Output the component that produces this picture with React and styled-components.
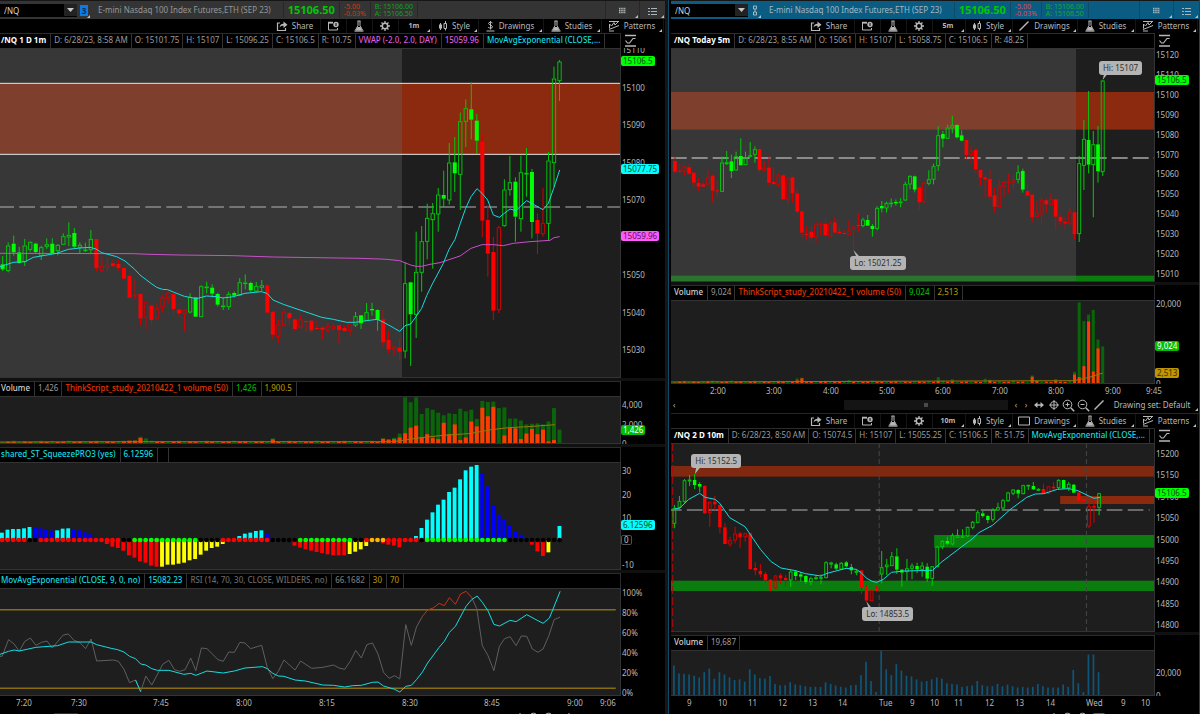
import React from "react";
import styled, { createGlobalStyle } from "styled-components";

const GlobalStyle = createGlobalStyle`
  * {
    box-sizing: border-box;
  }
  body {
    margin: 0;
    background: #000000;
    color: #b8b8b8;
    font-family: "Noto Sans", "Open Sans", sans-serif;
    font-size: 8px;
    line-height: 10px;
  }
  button, input {
    font: inherit;
    color: inherit;
    background: none;
    border: 0;
    padding: 0;
    margin: 0;
    border-radius: 0;
  }
`;

const GREEN = "#00ff00";
const RED = "#ff0000";
const CYAN = "#14dce0";

/* ---------- layout ---------- */

const Desk = styled.main`
  display: grid;
  grid-template-columns: 668fr 532fr;
  height: 100vh;
  overflow: hidden;
`;

const LeftPanel = styled.section`
  min-width: 0;
  border-right: 3px solid #161616;
`;

const RightPanel = styled.section`
  min-width: 0;
  padding-left: 2px;
  border-left: 1px solid #0b4b68;
  border-right: 1px solid #0b4b68;
`;

const Header = styled.header`
  display: flex;
  align-items: center;
  height: 19px;
  border-top: 1px solid #161616;
  background: ${(props) => (props.$active ? "#0a5c82" : "#343434")};
  color: ${(props) => (props.$active ? "#a4b8c0" : "#969696")};
  white-space: nowrap;
`;

const Combo = styled.div`
  display: flex;
  align-items: center;
  width: 77px;
  height: 13px;
  background: #000000;
  flex: none;
`;

const SymbolInput = styled.input`
  flex: 1;
  min-width: 0;
  padding-left: 4px;
  height: 13px;
  color: #d8d8d8;
  outline: none;
`;

const DropButton = styled.button`
  width: 13px;
  height: 12px;
  background: #222222;
  display: flex;
  align-items: center;
  justify-content: center;
`;

const LinkButton = styled.button`
  position: relative;
  width: 14px;
  height: 18px;
  display: flex;
  align-items: center;
  justify-content: center;
  flex: none;
`;

const LinkBadge = styled.span`
  width: 8px;
  height: 11px;
  line-height: 11px;
  background: #0a7be8;
  color: #0b2c50;
  font-weight: 700;
`;

const HeadCell = styled.div`
  display: flex;
  align-items: center;
  height: 16px;
  padding: 0 4px;
  border-right: 1px solid ${(props) => (props.$active ? "#0d4c69" : "#272727")};
`;

const Instrument = styled(HeadCell)`
  padding: 0 12px 0 7px;
`;

const LastPrice = styled(HeadCell)`
  color: #00c800;
  font-size: 11px;
  font-weight: 700;
`;

const Stack = styled(HeadCell)`
  flex-direction: column;
  align-items: flex-start;
  justify-content: center;
  font-size: 7px;
  line-height: 7px;
  color: ${(props) => props.$color};
`;

const Spacer = styled.div`
  flex: 1;
`;

const HeadButton = styled.button`
  position: relative;
  width: ${(props) => props.$w}px;
  height: 18px;
  padding-top: 4px;
  border-left: 1px solid ${(props) => (props.$active ? "#0d4c69" : "#272727")};
  color: #a9b4b8;
`;

const Toolbar = styled.div`
  display: flex;
  justify-content: flex-end;
  height: ${(props) => props.$h || 14}px;
  padding-right: 1px;
  border-top: ${(props) => (props.$ruled ? "1px solid #262626" : "0")};
`;

const ToolButton = styled.button`
  position: relative;
  display: flex;
  align-items: center;
  justify-content: center;
  gap: 4px;
  width: ${(props) => props.$w}px;
  padding-right: 2px;
  border-right: 1px solid #151515;
  font-size: ${(props) => (props.$strong ? 7 : 8)}px;
  font-weight: ${(props) => (props.$strong ? 700 : 400)};
  white-space: nowrap;
`;

const Corner = styled.i`
  position: absolute;
  right: 1px;
  bottom: 1px;
  border-left: 3px solid transparent;
  border-bottom: 3px solid #c0c0c0;
`;

const Row = styled.div`
  display: grid;
  grid-template-columns: minmax(0, 1fr) 44px;
`;

const Legend = styled.div`
  display: flex;
  height: 15px;
  border-top: 1px solid #2c2c2c;
  border-right: 1px solid #2c2c2c;
  overflow: hidden;
  white-space: nowrap;
`;

const LegendCell = styled.span`
  padding: 0 ${(props) => (props.$color ? 4 : 3)}px 0 ${(props) => (props.$flush ? 1 : 3)}px;
  min-width: 11px;
  line-height: 12px;
  border-right: 1px solid #333333;
  color: ${(props) => props.$color || "#9c9c9c"};
  font-weight: ${(props) => (props.$bold ? 700 : props.$color ? 500 : 400)};
`;

const ScaleButton = styled.button`
  display: flex;
  align-items: center;
  padding-left: 3px;
`;

const Plot = styled.div`
  position: relative;
  height: ${(props) => props.$h}px;
  background: #1e1e1e;
  border-top: 1px solid #333333;
  border-right: 1px solid #333333;
  border-bottom: 1px solid #333333;
`;

const PlotSvg = styled.svg`
  display: block;
  width: 100%;
  height: 100%;
`;

const PaneGap = styled.div`
  height: 3px;
  background: #111111;
`;

const AxisBox = styled.div`
  position: relative;
  display: flex;
  flex-direction: column;
  overflow: hidden;
  height: ${(props) => props.$h}px;
`;

const Scale = styled.div`
  flex: 1;
  display: flex;
  flex-direction: column;
  justify-content: space-between;
  margin: ${(props) => props.$from - 5}px 0 ${(props) => props.$to - 5}px;
  padding-left: 1px;
`;

const ScaleLabel = styled.span`
  height: 10px;
`;

const Tag = styled.span`
  position: absolute;
  left: 0;
  top: ${(props) => props.$y}px;
  height: 10px;
  padding: 0 2px;
  border-radius: 2px;
  background: ${(props) => props.$bg};
  color: ${(props) => props.$ink || "#0a4a14"};
  border: ${(props) => (props.$line ? "1px solid " + props.$line : "0")};
  line-height: ${(props) => (props.$line ? 8 : 10)}px;
`;

const Bubble = styled.span`
  position: absolute;
  left: ${(props) => props.$x}%;
  top: ${(props) => props.$y}px;
  height: 14px;
  padding: 0 4px;
  border-radius: 3px;
  background: #b4b4b4;
  color: #303030;
  line-height: 13px;
  white-space: nowrap;
`;

const TimeAxis = styled.div`
  display: flex;
  height: ${(props) => props.$h}px;
  line-height: 14px;
  overflow: hidden;
  white-space: nowrap;
`;

const Tick = styled.span`
  flex: ${(props) => props.$span} 0 0;
  min-width: 0;
`;

const ScrollRow = styled.div`
  display: flex;
  align-items: center;
  height: 16px;
`;

const Thumb = styled.div`
  height: 10px;
  flex: ${(props) => props.$grow};
  background: ${(props) => props.$bg || "#141414"};
  display: flex;
  align-items: center;
  justify-content: center;
`;

const Grip = styled.i`
  width: 4px;
  height: 4px;
  background: #4a4a4a;
`;

const Track = styled.div`
  flex: ${(props) => props.$grow};
  padding-left: 2px;
`;

const ScrollTool = styled.button`
  width: ${(props) => props.$w || 15}px;
  height: 14px;
  display: flex;
  align-items: center;
  justify-content: center;
`;

const SetButton = styled.button`
  position: relative;
  width: 92px;
  height: 14px;
  padding-right: 2px;
  white-space: nowrap;
`;

/* ---------- icons ---------- */

const Svg = ({ w = 12, h = 12, children }) => (
  <svg width={w} height={h} viewBox={`0 0 ${w} ${h}`} fill="none" stroke="currentColor" aria-hidden="true">
    {children}
  </svg>
);

const ShareIcon = () => (
  <Svg>
    <path d="M4 3H1.500v7.500h8V8" strokeWidth="1.200" />
    <path d="M3.500 7.500C4 4.500 5.500 3.700 7.500 3.700V1.500L11.500 4.700 7.500 8V5.800C5.800 5.800 4.500 6.200 3.500 7.500z" fill="currentColor" stroke="none" />
  </Svg>
);

const CalendarIcon = () => (
  <Svg>
    <path d="M6 3H1.500v7h9V8" />
    <path d="M1 2.500h5" strokeWidth="1.500" />
    <circle cx="9" cy="4.500" r="2.700" fill="currentColor" stroke="none" />
    <path d="M9 3v3" stroke="#000000" />
  </Svg>
);

const FlaskIcon = () => (
  <Svg w={10}>
    <path d="M3.500 1h3M4 1v4.500L1.500 10M6 1v4.500L8.500 10" />
    <path d="M3.500 7h3l2 3.500h-7z" fill="currentColor" stroke="none" />
    <path d="M.5 11h9" strokeWidth="1.300" />
  </Svg>
);

const GearIcon = () => (
  <Svg>
    <circle cx="6" cy="6" r="2.700" strokeWidth="1.500" />
    <path d="M6 1v2M6 9v2M1 6h2M9 6h2M2.500 2.500l1.300 1.300M8.200 8.200l1.300 1.300M9.500 2.500L8.200 3.800M3.800 8.200L2.500 9.500" strokeWidth="1.300" />
  </Svg>
);

const StyleIcon = () => (
  <Svg w={10}>
    <path d="M2.500 3v7M7.500 1v2M7.500 8.500v2" />
    <path d="M1 4.500h3v4H1z" fill="currentColor" stroke="none" />
    <path d="M6 3.500h2.500v5H6z" />
  </Svg>
);

const DollarIcon = () => (
  <Svg w={9}>
    <path d="M6.500 3C5.500 2 2.500 2 2.500 3.500S6.500 5 6.500 6.800 3.500 8.500 2.200 7.300M4.500 1v8.500" />
    <path d="M.5 11h8" />
  </Svg>
);

const LineIcon = () => (
  <Svg>
    <path d="M1.500 10.500l9-9" strokeWidth="1.400" />
  </Svg>
);

const BoxIcon = () => (
  <Svg>
    <path d="M.5 2h11v8H.5z" />
  </Svg>
);

const PatternsIcon = () => (
  <Svg>
    <path d="M1 1.500h10M1 9.500l10-4M1.500 8.500V4l2 2 2.500-3.500 1 2.500 3-3M1 11h5" />
  </Svg>
);

const CurveIcon = () => (
  <Svg w={13} h={13}>
    <path d="M1 1.500h11M1 12h11" strokeWidth="1.300" />
    <path d="M1.500 6.500l2 2.500h2l3.500-4.500h2.500" strokeWidth="1.200" />
  </Svg>
);

const GridIcon = () => (
  <Svg w={8} h={8}>
    <path d="M0 1.500h7M0 3.500h7M0 5.500h7" strokeDasharray="1.500 .7" strokeWidth="1.400" />
  </Svg>
);

const ListIcon = () => (
  <Svg w={10} h={9}>
    <path d="M3 1.500h6M3 4.500h6M3 7.500h6" />
    <path d="M0 1.500h2M0 4.500h2M0 7.500h2" />
  </Svg>
);

const ChainIcon = () => (
  <Svg w={6} h={11}>
    <path d="M1.500 1h3v3h-3zM1.500 7h3v3h-3zM3 4v3" />
  </Svg>
);

const ZoomIcon = ({ plus }) => (
  <Svg w={13} h={13}>
    <circle cx="5.500" cy="5.500" r="4.300" />
    <path d="M8.700 8.700l3.500 3.500" strokeWidth="1.500" />
    <path d={plus ? "M3.500 5.500h4M5.500 3.500v4" : "M3.500 5.500h4"} />
  </Svg>
);

const TargetIcon = () => (
  <Svg>
    <circle cx="6" cy="6" r="3.500" />
    <path d="M6 1v10M1 6h10" />
  </Svg>
);

const PanIcon = () => (
  <Svg>
    <path d="M1 6l3.500-3v6zM11 6L7.500 3v6z" fill="currentColor" stroke="none" />
    <path d="M4 6h4" strokeWidth="1.500" />
  </Svg>
);

/* ---------- series ---------- */

// one candle is "high top bottom low kind", capitals are filled bodies
const parse = (text, dy = 0) =>
  text
    .trim()
    .split(/\s*,\s*/)
    .map((c) => {
      const [hi, top, bot, lo, kind] = c.split(" ");
      return { hi: +hi + dy, top: +top + dy, bot: +bot + dy, lo: +lo + dy, kind };
    });

const minuteCandles = [
  ...parse(
    `138 163 178 183 G,97 107 182 187 g,77 101 127 137 G,110 127 159 161 G,87 107 155 168 g,94 96 118 125 g,98 101 126 130 G,
    107 112 136 150 g,85 103 109 117 g,85 101 130 131 G,102 105 122 136 g,70 79 103 104 g,37 75 81 108 g,54 69 110 114 G,
    97 105 112 132 g,98 119 121 126 g,60 87 119 130 g,87 87 174 185 R,140 168 182 187 r,143 165 172 184 r,148 160 168 173 R,
    150 162 174 182 R,172 174 206 209 R,194 198 263 264 R,208 255 257 268 r,250 252 325 346 R,276 277 323 357 r,284 287 330 343 R,
    278 295 324 330 r,254 262 290 307 r,241 248 265 280 r,250 252 297 313 R,296 299 310 320 R,298 299 310 364 r,250 261 306 310 g,
    261 262 320 321 G,226 229 320 320 g,215 230 233 250 g,223 233 251 262 G,249 252 284 290 G,262 287 290 300 g,245 252 290 300 g,
    245 249 257 263 G,204 217 255 258 g,193 218 221 238 g,215 219 241 248 G,216 228 243 247 g,210 226 232 243 g,222 226 308 309 R,
    304 305 374 386 R,329 344 380 400 r,297 307 344 350 r,308 309 325 348 R,326 328 357 362 R,316 328 352 355 r,332 333 336 366 R,
    330 332 361 370 R,332 354 357 359 R,350 353 359 387 R,338 349 360 369 r,340 349 355 367 r,345 346 360 402 R,348 354 363 366 R,
    328 343 362 378 r,306 319 345 351 g,315 316 340 357 G,279 307 331 331 g,278 297 301 317 G,298 300 330 362 G,300 328 397 410 R,
    362 390 418 431 R,404 411 418 435 r,385 413 425 453 R`,
    486
  ),
  ...parse(
    `637 700 903 925 g,695 697 793 948 G,545 666 793 864 g,528 574 667 725 g,461 504 574 628 g,459 490 509 656 g,414 434 492 545 g,
    362 435 446 472 G,279 338 450 464 g,261 337 370 426 G,188 214 373 480 g,148 175 214 291 g,97 178 209 268 G,192 212 272 312 G,
    254 275 512 562 R,465 510 611 680 R,560 606 782 810 R,527 532 779 790 r,388 419 527 530 g,318 397 419 437 g,382 395 500 575 G,
    317 367 506 545 g,294 369 372 440 g,357 366 516 565 G,491 510 551 612 R,414 520 551 560 r,306 332 520 572 g,50 86 338 410 g,
    30 35 92 153 g`,
    6
  ),
];

const fiveMinCandles = parse(
  `320 333 365 370 R,342 362 365 370 R,347 350 363 375 r,342 352 371 375 R,366 368 398 412 R,385 399 410 422 R,394 403 410 412 R,
  360 382 402 405 r,374 377 422 457 R,388 421 424 441 R,320 338 424 425 g,303 337 341 345 g,314 334 363 384 G,305 319 360 362 g,
  265 318 346 346 G,305 322 344 345 g,276 316 319 322 g,289 298 313 338 g,295 297 360 369 R,333 354 361 365 r,317 353 398 409 R,
  352 396 402 405 R,372 377 404 412 r,373 376 448 449 R,383 386 448 462 r,380 382 430 458 R,418 430 485 492 R,482 484 548 561 R,
  529 552 555 570 R,530 545 563 574 R,516 524 561 578 r,517 521 524 557 r,505 522 556 557 R,512 519 558 560 r,500 517 548 550 R,
  531 545 550 552 R,541 549 552 553 R,511 542 553 556 r,529 530 538 600 r,488 525 528 547 R,503 509 527 532 g,495 510 527 528 G,
  522 528 537 560 G,469 474 535 541 g,453 468 475 487 G,455 459 474 488 g,445 458 461 472 g,448 456 460 467 G,444 455 458 472 g,
  395 402 450 453 g,376 378 402 418 g,377 379 419 427 G,410 412 457 479 R,396 398 455 462 r,361 388 400 406 g,341 349 388 403 g,
  229 256 347 363 g,243 252 266 292 G,224 233 265 266 g,197 226 234 250 g,223 225 262 266 G,241 256 272 274 G,268 270 315 326 R,
  288 304 314 340 r,294 300 358 372 R,358 360 383 407 R,374 382 388 441 R,360 387 440 450 R,414 436 470 488 R,390 406 470 472 r,
  392 396 408 443 r,369 394 398 430 r,375 388 396 418 r,346 367 388 400 g,356 363 419 428 G,400 423 437 438 R,432 434 502 517 R,
  452 489 500 501 r,442 450 492 519 r,446 451 463 488 R,430 447 463 464 r,446 448 500 540 R,494 501 514 524 R,504 516 520 540 R,
  474 485 520 528 r,486 487 552 567 R,318 340 551 576 g,210 267 346 420 g,123 270 344 370 G,243 283 344 502 g,228 283 364 398 G,
  90 92 365 378 g`
);

const tenMinCandles = parse(
  `195 204 250 265 g,168 183 202 206 g,117 121 184 188 g,105 119 123 138 g,102 120 135 147 G,127 132 140 157 G,136 138 220 221 R,
  184 186 218 260 r,168 185 193 210 R,193 195 262 280 R,250 262 312 313 R,290 300 312 320 r,260 281 300 310 r,275 280 292 323 R,
  278 280 290 305 r,278 280 387 389 R,367 384 391 406 R,372 393 403 412 R,395 402 421 426 R,417 419 447 455 R,405 407 444 448 r,
  400 406 415 432 R,405 414 420 438 R,390 395 420 440 g,390 395 408 420 G,396 403 410 425 G,406 408 426 432 G,410 415 425 435 g,
  405 412 416 420 g,403 412 415 433 g,364 367 413 415 g,365 368 372 385 g,368 373 386 390 G,366 369 387 388 g,363 367 379 382 G,
  372 381 391 403 G,387 393 397 405 g,390 391 443 462 R,436 442 482 484 R,450 451 482 483 r,438 444 453 455 R,333 382 402 430 g,
  357 374 380 405 g,336 349 377 378 g,325 349 389 402 G,388 389 398 440 G,357 385 395 422 g,370 377 385 418 g,368 378 388 400 G,
  366 377 388 410 g,370 380 416 425 G,378 379 415 438 g,318 320 380 382 g,300 303 320 328 g,290 303 311 315 G,280 286 312 316 g,
  268 285 292 294 g,268 287 292 295 g,260 261 288 292 g,243 246 262 268 g,210 217 247 250 g,212 220 228 233 G,225 228 240 250 G,
  205 209 238 245 g,188 202 210 212 g,177 181 204 210 g,155 158 182 186 g,147 149 160 166 g,148 150 161 175 G,134 136 161 163 g,
  134 135 138 150 g,126 138 148 150 G,145 147 151 153 g,131 147 161 162 R,138 139 160 161 r,127 140 145 150 R,118 120 143 148 g,
  119 120 146 147 G,126 132 144 152 g,132 134 158 160 G,156 157 182 183 R,176 178 184 188 R,188 198 258 264 r,175 198 203 248 R,
  158 160 202 226 g`
);

// [index, total, sell side]
const minuteVolume = [
  [23, 7, 7], [24, 8, 7], [25, 19, 15], [26, 14, 0], [49, 14, 11], [69, 14, 13], [70, 12, 10], [71, 16, 12], [72, 29, 17],
  [73, 140, 30], [74, 125, 47], [75, 140, 53], [76, 89, 18], [77, 107, 27], [78, 102, 15], [79, 93, 12], [80, 85, 62],
  [81, 91, 27], [82, 89, 57], [83, 105, 9], [84, 97, 17], [85, 102, 66], [86, 74, 51], [87, 129, 108], [88, 126, 82],
  [89, 127, 111], [90, 107, 0], [91, 109, 23], [92, 75, 47], [93, 75, 45], [94, 69, 12], [95, 57, 29], [96, 59, 43],
  [97, 60, 27], [98, 57, 41], [99, 66, 5], [100, 107, 9], [101, 41, 0],
];

const fiveMinVolume = [
  [8, 7, 0], [26, 14, 8], [27, 16, 14], [37, 9, 0], [56, 18, 6], [59, 11, 4], [66, 13, 0], [67, 10, 7], [76, 23, 19],
  [77, 9, 6], [81, 12, 6], [85, 34, 26], [86, 245, 18], [87, 188, 51], [88, 208, 187], [89, 222, 35], [90, 132, 105], [91, 111, 0],
];

const tenMinVolume = [
  678, 702, 703, 705, 709, 714, 698, 687, 718, 698, 705, 714, 722, 720, 727, 689, 705, 716, 718, 710, 734, 738, 738, 729,
  736, 738, 741, 743, 743, 743, 729, 734, 739, 743, 745, 738, 737, 707, 666, 725, 759, 633, 689, 707, 673, 693, 709, 711,
  720, 727, 725, 720, 714, 718, 732, 734, 736, 743, 741, 739, 725, 738, 741, 741, 734, 741, 736, 741, 745, 743, 745, 743,
  734, 741, 745, 745, 745, 736, 743, 691, 732, 759, 644, 644, 698,
];

// momentum histogram, [colour, first index, values]
const squeeze = [
  ["#00ffff", 0, [22, 31, 33, 33, 35, 39]],
  ["#0000ff", 6, [37, 35, 32, 28]],
  ["#00ffff", 10, [29, 34, 35]],
  ["#0000ff", 13, [31, 29, 23, 17, 9]],
  [RED, 19, [-12, -20, -24, -32, -46, -53, -64, -68, -77, -80]],
  ["#ffff00", 29, [-80, -74, -74, -71, -68, -61, -57, -44, -32, -24, -20, -12]],
  ["#00ffff", 43, [12, 19, 22, 27, 29]],
  ["#0000ff", 48, [19, 9]],
  [RED, 53, [-17, -23, -28, -32, -36, -39, -43, -46, -46, -46]],
  ["#ffff00", 63, [-42, -35, -28, -18]],
  [RED, 69, [-10, -14, -17, -22]],
  ["#00ffff", 75, [12, 36, 61, 83, 106, 121, 144, 157, 182, 209, 220, 225]],
  ["#0000ff", 87, [199, 161, 102, 76, 60, 44, 26, 16, 6]],
  [RED, 96, [-14, -34, -48]],
  ["#ffff00", 99, [-37]],
  ["#00ffff", 101, [42]],
];

const dotRuns = "r5k2r15k2g12k4r9k5g10k2r1o3r6k1g15k10";
const dotColors = { r: RED, k: "#000000", g: GREEN, o: "#ffb400" };
const dots = [...dotRuns.matchAll(/([a-z])(\d+)/g)].flatMap((m) => Array(+m[2]).fill(dotColors[m[1]]));

/* ---------- chart parts ---------- */

const Chart = ({ box, label, children }) => (
  <PlotSvg viewBox={box} preserveAspectRatio="none" role="img" aria-label={label}>
    {children}
  </PlotSvg>
);

const Candles = ({ data, x0, step, w }) =>
  data.map((c, i) => {
    const x = x0 + i * step;
    const up = c.kind.toLowerCase() === "g";
    const filled = c.kind === "G" || c.kind === "R";
    const line = up ? "#00c80a" : "#d20000";
    const h = Math.max(c.bot - c.top, 3);
    return (
      <g key={i}>
        <path d={`M${x} ${c.hi}V${c.top}M${x} ${c.bot}V${c.lo}`} stroke={line} strokeWidth="3" />
        {filled ? (
          <rect x={x - w / 2} y={c.top} width={w} height={h} fill={up ? GREEN : RED} />
        ) : (
          <rect x={x - w / 2 + 1} y={c.top + 1} width={w - 2} height={h - 1} fill="none" stroke={line} strokeWidth="2.8" />
        )}
      </g>
    );
  });

const Line = ({ points, color, dash, w = 1 }) => (
  <polyline points={points} fill="none" stroke={color} strokeWidth={w} strokeDasharray={dash} vectorEffect="non-scaling-stroke" />
);

const SplitVolume = ({ data, count, x0, step, w, base }) => {
  const known = new Map(data.map(([i, total, sell]) => [i, [total, sell]]));
  return Array.from({ length: count }, (_, i) => {
    const [total, sell] = known.get(i) || [3 + ((i * 7) % 5), i % 3 ? 3 : 0];
    const x = x0 + i * step - w / 2;
    return (
      <g key={i}>
        <rect x={x} y={base - total} width={w} height={total} fill="#0a640a" />
        <rect x={x} y={base - sell} width={w} height={sell} fill="#ff3c00" />
      </g>
    );
  });
};

const Axis = ({ h, from, to, labels, children }) => (
  <AxisBox $h={h}>
    <Scale $from={from} $to={to}>
      {labels.map((l) => (
        <ScaleLabel key={l}>{l}</ScaleLabel>
      ))}
    </Scale>
    {children}
  </AxisBox>
);

const LegendRow = ({ items, scale }) => (
  <Row>
    <Legend>
      {items.map(([text, color, bold, flush], i) => (
        <LegendCell key={i} $color={color} $bold={bold} $flush={flush}>
          {text}
        </LegendCell>
      ))}
    </Legend>
    {scale && (
      <ScaleButton aria-label="Scale">
        <CurveIcon />
      </ScaleButton>
    )}
  </Row>
);

const Times = ({ h = 14, lead, ticks }) => (
  <TimeAxis $h={h}>
    <Tick $span={lead} />
    {ticks.map(([label, span], i) => (
      <Tick key={i} $span={span}>
        {label}
      </Tick>
    ))}
  </TimeAxis>
);

const PanelHeader = ({ active, id }) => (
  <Header $active={active}>
    <Combo>
      <SymbolInput id={id} aria-label="Symbol" defaultValue="/NQ" />
      <DropButton aria-label="Symbol list">
        <svg width="7" height="4" viewBox="0 0 7 4"><path d="M0 0h7L3.500 4z" fill="#c8c8c8" /></svg>
      </DropButton>
    </Combo>
    <LinkButton aria-label="Link">
      {active ? <ChainIcon /> : <LinkBadge>3</LinkBadge>}
      <Corner />
    </LinkButton>
    <Instrument $active={active}>E-mini Nasdaq 100 Index Futures,ETH (SEP 23)</Instrument>
    <LastPrice $active={active}>15106.50</LastPrice>
    <Stack $active={active} $color={active ? "#e04a42" : "#d83218"}>
      <span>-5.00</span>
      <span>-0.03%</span>
    </Stack>
    <Stack $active={active} $color={active ? "#12a83c" : "#14a014"}>
      <span>B: 15106.00</span>
      <span>A: 15106.50</span>
    </Stack>
    <Spacer />
    <HeadButton $w={34} $active={active} aria-label="Grid layout">
      <GridIcon />
      <Corner />
    </HeadButton>
    <HeadButton $w={26} $active={active} aria-label="Menu">
      <ListIcon />
      <Corner />
    </HeadButton>
  </Header>
);

const ChartTools = ({ period, drawing, ...rest }) => (
  <Toolbar {...rest}>
    <ToolButton $w={50}><ShareIcon />Share</ToolButton>
    <ToolButton $w={26} aria-label="Calendar"><CalendarIcon /></ToolButton>
    <ToolButton $w={26} aria-label="Lab"><FlaskIcon /></ToolButton>
    <ToolButton $w={26} aria-label="Settings"><GearIcon /></ToolButton>
    <ToolButton $w={33} $strong>{period}<Corner /></ToolButton>
    <ToolButton $w={47}><StyleIcon />Style<Corner /></ToolButton>
    <ToolButton $w={65}>{drawing}Drawings<Corner /></ToolButton>
    <ToolButton $w={58}><FlaskIcon />Studies<Corner /></ToolButton>
    <ToolButton $w={62}><PatternsIcon />Patterns<Corner /></ToolButton>
  </Toolbar>
);

const ScrollTools = ({ lead, thumb, tail, bg, drawing = <LineIcon /> }) => (
  <ScrollRow>
    <Track $grow={lead}>‹</Track>
    <Thumb $grow={thumb} $bg={bg}><Grip /></Thumb>
    <Track $grow={tail} />
    <ScrollTool $w={10} aria-label="Scroll left">‹</ScrollTool>
    <ScrollTool $w={10} aria-label="Scroll right">›</ScrollTool>
    <ScrollTool aria-label="Pan"><PanIcon /></ScrollTool>
    <ScrollTool aria-label="Crosshair"><TargetIcon /></ScrollTool>
    <ScrollTool aria-label="Zoom in"><ZoomIcon plus /></ScrollTool>
    <ScrollTool aria-label="Zoom out"><ZoomIcon /></ScrollTool>
    <ScrollTool $w={16} aria-label="Draw">{drawing}</ScrollTool>
    <SetButton>Drawing set: Default<Corner /></SetButton>
  </ScrollRow>
);

/* ---------- panels ---------- */

const MinutePanel = () => (
  <LeftPanel>
    <PanelHeader id="symbol-left" />
    <ChartTools period="1m" drawing={<DollarIcon />} />
    <LegendRow
      scale
      items={[
        ["/NQ 1 D 1m", "#ffffff", true, true],
        ["D: 6/28/23, 8:58 AM"],
        ["O: 15101.75"],
        ["H: 15107"],
        ["L: 15096.25"],
        ["C: 15106.5"],
        ["R: 10.75"],
        ["VWAP (-2.0, 2.0, DAY)", "#dc5adc"],
        ["15059.96", "#dc5adc"],
        ["MovAvgExponential (CLOSE,...", CYAN],
      ]}
    />
    <Row>
      <Plot $h={330}>
        <Chart box="0 3 1860 984" label="/NQ one minute price">
          <rect x="0" y="106" width="1860" height="213" fill="#8b2a0e" />
          <rect x="0" y="0" width="1206" height="990" fill="#686868" fillOpacity=".35" />
          <Line points="0,106 1860,106" color="#e6e6e6" />
          <Line points="0,319 1860,319" color="#e6e6e6" />
          <path d="M-5 477H1860" stroke="#b4b4b4" strokeWidth="3" strokeDasharray="47 16" />
          <Candles data={minuteCandles} x0={8} step={16.54} w={12} />
          <Line
            color="#c850c8"
            points="0,616 400,617 450,619 540,621 700,623 820,627 1080,631 1140,633 1160,634 1199,638 1232,651 1248,655 1265,655 1290,649 1320,644 1380,624 1413,601 1446,590 1480,590 1510,593 1540,586 1590,581 1650,577 1662,569 1679,566"
          />
          <Line
            color={CYAN}
            points="0,656 40,643 75,641 100,628 170,616 205,604 240,600 270,598 288,603 305,614 350,626 375,639 404,664 420,681 450,704 470,718 487,724 503,725 520,732 553,745 590,752 619,744 652,746 668,750 700,746 735,736 784,731 801,736 819,756 850,769 900,786 965,808 1000,814 1040,823 1065,823 1100,818 1131,814 1149,822 1180,839 1199,850 1215,833 1232,828 1248,806 1265,781 1280,743 1297,708 1330,646 1347,604 1365,574 1381,526 1397,481 1413,446 1431,422 1446,436 1463,456 1480,501 1498,508 1513,496 1530,483 1548,488 1562,474 1580,458 1600,469 1629,485 1645,466 1661,421 1679,366"
          />
        </Chart>
      </Plot>
      <Axis h={330} from={2} to={28} labels={[15110, 15100, 15090, 15080, 15070, 15060, 15050, 15040, 15030]}>
        <Tag $y={8} $bg={GREEN}>15106.5</Tag>
        <Tag $y={116} $bg="#00ffff">15077.75</Tag>
        <Tag $y={183} $bg="#ff5aff" $ink="#5a145a">15059.96</Tag>
      </Axis>
    </Row>
    <PaneGap />
    <LegendRow
      items={[
        ["Volume", "#d2d2d2", false, true],
        ["1,426"],
        ["ThinkScript_study_20210422_1 volume (50)", "#e63700"],
        ["1,426", "#00b400"],
        ["1,900.5", "#aa8c00"],
      ]}
    />
    <Row>
      <Plot $h={48}>
        <Chart box="0 66 1860 141" label="Volume">
          <SplitVolume data={minuteVolume} count={102} x0={8} step={16.54} w={12} base={207} />
          <Line
            color="#96780a"
            points="0,204 380,203 900,203 1180,203 1260,191 1335,183 1410,178 1475,166 1525,160 1582,157 1665,151"
          />
        </Chart>
      </Plot>
      <Axis h={48} from={9} to={0} labels={["4,000", "2,000", "0"]}>
        <Tag $y={29} $bg="#00be00" $ink="#ffffff">1,426</Tag>
      </Axis>
    </Row>
    <PaneGap />
    <LegendRow items={[["shared_ST_SqueezePRO3 (yes)", CYAN, false, true], ["6.12596", CYAN], [""]]} />
    <Row>
      <Plot $h={108}>
        <Chart box="0 265 1450 318" label="Squeeze momentum">
          {squeeze.map(([color, first, values]) =>
            values.map((v, k) => (
              <rect
                key={first + k}
                x={(first + k) * 12.91}
                y={v > 0 ? 496 - v : 496}
                width="9"
                height={Math.abs(v)}
                fill={color}
              />
            ))
          )}
          {dots.map((c, i) => (
            <ellipse key={i} cx={5 + i * 12.91} cy="496" rx="5.600" ry="7" fill={c} />
          ))}
        </Chart>
      </Plot>
      <Axis h={108} from={9} to={5} labels={["30", "20", "10", "", "-10"]}>
        <Tag $y={58} $bg="#00ffff">6.12596</Tag>
        <Tag $y={73} $bg="#000000" $ink="#c8c8c8" $line="#505050">0</Tag>
      </Axis>
    </Row>
    <PaneGap />
    <LegendRow
      items={[
        ["MovAvgExponential (CLOSE, 9, 0, no)", CYAN, false, true],
        ["15082.23", CYAN],
        ["RSI (14, 70, 30, CLOSE, WILDERS, no)", "#696969"],
        ["66.1682", "#787878"],
        ["30", "#aa8c00"],
        ["70", "#aa8c00"],
      ]}
    />
    <Row>
      <Plot $h={108}>
        <Chart box="0 643 1450 318" label="RSI and moving average">
          <Line points="0,705 1440,705" color="#8a6c10" w={1.5} />
          <Line points="0,941 1440,941" color="#8a6c10" w={1.5} />
          <Line
            color="#5f5f5f"
            points="0,845 5,845 20,795 33,808 45,830 58,800 71,790 84,812 97,803 110,799 122,820 148,781 160,778 173,797 187,804 200,822 213,793 226,859 265,856 277,860 290,884 303,924 317,916 329,951 341,904 355,931 381,868 395,857 408,885 420,890 433,885 446,850 458,888 471,820 484,822 510,855 522,860 535,832 548,833 561,803 573,805 586,822 612,812 625,878 638,912 651,890 664,856 690,886 703,859 729,881 755,878 780,871 793,880 806,884 819,860 832,827 845,850 858,810 871,805 884,838 897,893 910,911 923,903 935,913 949,750 962,812 974,757 988,725"
          />
          <Line color={CYAN} points="317,916 329,951" />
          <Line color="#c83214" points="988,725 1000,706 1013,700 1027,686 1039,693 1051,669 1065,689 1077,658 1090,650 1103,668" />
          <Line
            color="#5f5f5f"
            points="1103,668 1115,702 1128,813 1141,842 1155,888 1168,815 1180,792 1193,786 1207,813 1219,784 1232,785 1245,823 1258,833 1270,823 1283,785 1296,735 1310,727"
          />
          <Line
            color={CYAN}
            points="0,839 20,830 33,826 45,829 84,818 135,813 160,802 213,802 226,810 260,821 275,825 290,832 303,845 317,852 329,868 341,871 355,882 368,887 395,887 430,899 446,896 458,902 484,889 522,895 548,889 573,880 614,876 625,882 638,896 651,904 664,905 690,916 714,919 755,931 780,932 806,937 825,933 845,932 871,923 884,922 897,934 923,944 935,952 949,935 962,932 974,915 988,892 1000,865 1027,818 1039,800 1051,773 1065,755 1090,695 1103,675 1116,664 1128,683 1141,708 1155,749 1168,754 1193,737 1207,741 1232,720 1258,738 1270,746 1285,730 1310,650"
          />
        </Chart>
      </Plot>
      <Axis h={108} from={5} to={3} labels={["100%", "80%", "60%", "40%", "20%", "0%"]} />
    </Row>
    <Times
      lead={16}
      ticks={[["7:20", 55], ["7:30", 82], ["7:45", 83], ["8:00", 83], ["8:15", 83], ["8:30", 82], ["8:45", 83], ["9:00", 33], ["9:06", 65]]}
    />
    <ScrollTools lead={52} thumb={24} tail={400} bg="#2c2c2c" />
  </LeftPanel>
);

const SidePanel = () => (
  <RightPanel>
    <PanelHeader id="symbol-right" active />
    <ChartTools period="5m" drawing={<LineIcon />} />
    <LegendRow
      scale
      items={[
        ["/NQ Today 5m", "#ffffff", true],
        ["D: 6/28/23, 8:55 AM"],
        ["O: 15061"],
        ["H: 15107"],
        ["L: 15058.75"],
        ["C: 15106.5"],
        ["R: 48.25"],
      ]}
    />
    <Row>
      <Plot $h={234}>
        <Chart box="18 -3 1449 696" label="/NQ five minute price">
          <rect x="15" y="126" width="1452" height="113" fill="#8b2a0e" />
          <rect x="15" y="677" width="1452" height="19" fill="#0a7d0e" />
          <rect x="15" y="-6" width="1218" height="702" fill="#686868" fillOpacity=".35" />
          <path d="M17 324H1467" stroke="#a8a8a8" strokeWidth="4" strokeDasharray="48 15" />
          <Candles data={fiveMinCandles} x0={30} step={14.1} w={11} />
          <path d="M565 600l8 18h9zM1313 90l5-22h12z" fill="#b4b4b4" />
        </Chart>
        <Bubble $x={88.6} $y={12}>Hi: 15107</Bubble>
        <Bubble $x={37.1} $y={207}>Lo: 15021.25</Bubble>
      </Plot>
      <Axis
        h={234}
        from={7}
        to={8}
        labels={[15120, 15110, 15100, 15090, 15080, 15070, 15060, 15050, 15040, 15030, 15020, 15010]}
      >
        <Tag $y={27} $bg={GREEN}>15106.5</Tag>
      </Axis>
    </Row>
    <PaneGap />
    <LegendRow
      items={[
        ["Volume", "#d2d2d2"],
        ["9,024"],
        ["ThinkScript_study_20210422_1 volume (50)", "#e63700"],
        ["9,024", "#00b400"],
        ["2,513", "#aa8c00"],
      ]}
    />
    <Row>
      <Plot $h={84}>
        <Chart box="18 753 1449 249" label="Volume">
          <SplitVolume data={fiveMinVolume} count={92} x0={30} step={14.1} w={9} base={1002} />
          <Line color="#96780a" points="15,999 900,996 1225,995 1250,990 1275,984 1313,972" />
        </Chart>
      </Plot>
      <Axis h={84} from={4} to={0} labels={["20,000", "0"]}>
        <Tag $y={41} $bg="#00be00" $ink="#ffffff">9,024</Tag>
        <Tag $y={68} $bg="#be9600" $ink="#3c2c00">2,513</Tag>
      </Axis>
    </Row>
    <Times
      h={13}
      lead={39}
      ticks={[["2:00", 56], ["3:00", 57], ["4:00", 56], ["5:00", 56], ["6:00", 57], ["7:00", 56], ["8:00", 57], ["9:00", 41], ["9:45", 53]]}
    />
    <ScrollTools lead={174} thumb={167} tail={1} />
    <ChartTools period="10m" drawing={<BoxIcon />} $h={15} $ruled />
    <LegendRow
      scale
      items={[
        ["/NQ 2 D 10m", "#ffffff", true],
        ["D: 6/28/23, 8:50 AM"],
        ["O: 15074.5"],
        ["H: 15107"],
        ["L: 15055.25"],
        ["C: 15106.5"],
        ["R: 51.75"],
        ["MovAvgExponential (CLOSE,...", CYAN],
      ]}
    />
    <Row>
      <Plot $h={189}>
        <Chart box="18 12 1415 561" label="/NQ ten minute price">
          <rect x="15" y="78" width="1418" height="32" fill="#802810" />
          <rect x="1158" y="168" width="275" height="24" fill="#8b2a0e" />
          <rect x="789" y="285" width="644" height="38" fill="#0a7d0e" />
          <rect x="15" y="422" width="1418" height="31" fill="#0a7d0e" />
          <path d="M23 9V576" stroke="#b40a0a" strokeWidth="3" strokeDasharray="24 9" />
          <path d="M628 9V576M1235 9V576" stroke="#444444" strokeWidth="3" strokeDasharray="15 9" />
          <path d="M3 210H1420" stroke="#b4b4b4" strokeWidth="3" strokeDasharray="46 15.500" />
          <Candles data={tenMinCandles} x0={28} step={14.81} w={10} />
          <Line
            color={CYAN}
            points="28,207 44,204 70,178 102,160 118,172 147,178 161,190 190,233 235,260 250,283 280,328 310,364 340,384 383,392 412,401 457,408 475,400 531,385 561,388 575,398 590,414 607,424 621,427 640,418 664,397 700,393 784,391 812,365 870,320 900,297 920,278 960,256 1010,210 1060,172 1085,162 1110,161 1150,148 1183,146 1210,152 1240,167 1257,175 1275,172"
          />
          <path d="M88 102l4-20h12zM590 484l7 20h9z" fill="#b4b4b4" />
        </Chart>
        <Bubble $x={4.2} $y={10}>Hi: 15152.5</Bubble>
        <Bubble $x={39.6} $y={163}>Lo: 14853.5</Bubble>
      </Plot>
      <Axis h={189} from={11} to={7} labels={[15200, 15150, 15100, 15050, 15000, 14950, 14900, 14850, 14800]}>
        <Tag $y={45} $bg={GREEN}>15106.5</Tag>
      </Axis>
    </Row>
    <PaneGap />
    <LegendRow items={[["Volume", "#d2d2d2"], ["19,687"]]} />
    <Row>
      <Plot $h={46}>
        <Chart box="18 633 1415 135" label="Volume">
          {tenMinVolume.map((y, i) => (
            <rect key={i} x={24 + i * 14.81} y={y} width="5" height={768 - y} fill="#0e5578" />
          ))}
        </Chart>
      </Plot>
      <Axis h={46} from={23} to={0} labels={["20,000", "0"]} />
    </Row>
    <Times
      lead={16}
      ticks={[
        ["9", 31], ["10", 30], ["11", 30], ["12", 30], ["13", 30], ["14", 41], ["Tue", 31], ["9", 20], ["10", 24],
        ["11", 31], ["12", 30], ["13", 31], ["14", 40], ["Wed", 35], ["9", 20], ["10", 58],
      ]}
    />
    <ScrollTools lead={174} thumb={167} tail={1} bg="#000000" drawing={<BoxIcon />} />
  </RightPanel>
);

const App = () => (
  <>
    <GlobalStyle />
    <Desk>
      <MinutePanel />
      <SidePanel />
    </Desk>
  </>
);

export default App;
